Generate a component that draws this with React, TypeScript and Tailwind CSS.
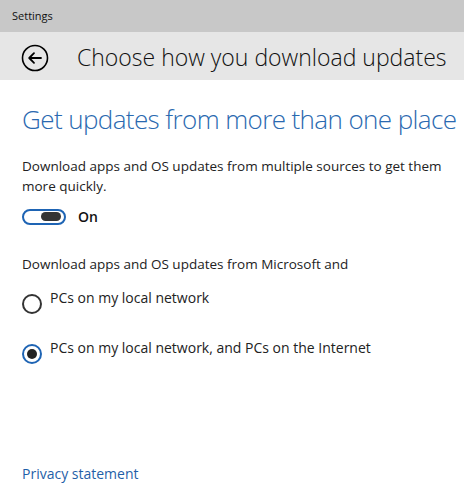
import { useState } from 'react';

function BackIcon() {
	return (
		<svg width="28" height="28" viewBox="0 0 28 28" fill="none">
			<circle cx="14" cy="14" r="12.5" stroke="#000" strokeWidth="1.6" />
			<path
				d="M20 14H8.5M13 9.2L8.2 14l4.8 4.8"
				stroke="#000"
				strokeWidth="1.8"
				strokeLinecap="round"
				strokeLinejoin="round"
			/>
		</svg>
	);
}

function Radio({ checked, label, onClick }: { checked: boolean; label: string; onClick: () => void }) {
	return (
		<button type="button" onClick={onClick} className="flex items-start gap-2 text-left">
			<span
				className={`mt-[7px] w-5 h-5 rounded-full border-2 flex items-center justify-center ${
					checked ? 'border-[#1e64b4]' : 'border-[#333]'
				}`}
			>
				{checked && <span className="w-[10px] h-[10px] rounded-full bg-[#222]" />}
			</span>
			<span className="text-[14px] text-[#222]">{label}</span>
		</button>
	);
}

export default function App() {
	const [on, setOn] = useState(true);
	const [source, setSource] = useState<'local' | 'internet'>('internet');

	return (
		<div className="w-[464px] h-[496px] bg-white flex flex-col font-['Open_Sans',sans-serif] overflow-hidden">
			<div className="h-8 bg-[#c8c8c8] flex items-center px-3 text-[11px] text-[#111]">Settings</div>

			<div className="h-12 bg-[#e6e6e6] flex items-center pl-[21px] pt-[3px] gap-[28px]">
				<BackIcon />
				<h1 className="text-[23px] font-light text-[#111] whitespace-nowrap">Choose how you download updates</h1>
			</div>

			<div className="flex-1 flex flex-col px-[22px]">
				<h2 className="mt-[22px] text-[26px] font-light text-[#2a69b0] leading-[34px] tracking-[-0.6px] whitespace-nowrap">
					Get updates from more than one place
				</h2>

				<p className="mt-[20px] text-[13.5px] leading-[20px] text-[#222]">
					Download apps and OS updates from multiple sources to get them more quickly.
				</p>

				<div className="mt-[10px] flex items-center gap-3">
					<button
						type="button"
						onClick={() => setOn(!on)}
						className="w-[44px] h-[16px] rounded-full border-2 border-[#1e64b4] flex items-center px-[3px] justify-end"
					>
						<span className="w-[20px] h-[9px] rounded-full bg-[#333]" />
					</button>
					<span className="text-[14px] font-semibold text-[#111]">{on ? 'On' : 'Off'}</span>
				</div>

				<p className="mt-[27px] text-[13.5px] text-[#222]">Download apps and OS updates from Microsoft and</p>

				<div className="mt-[13px] flex flex-col gap-[23px]">
					<Radio checked={source === 'local'} label="PCs on my local network" onClick={() => setSource('local')} />
					<Radio
						checked={source === 'internet'}
						label="PCs on my local network, and PCs on the Internet"
						onClick={() => setSource('internet')}
					/>
				</div>

				<a href="#" className="mt-auto mb-[12px] text-[14px] text-[#1f5fa8]">
					Privacy statement
				</a>
			</div>
		</div>
	);
}
